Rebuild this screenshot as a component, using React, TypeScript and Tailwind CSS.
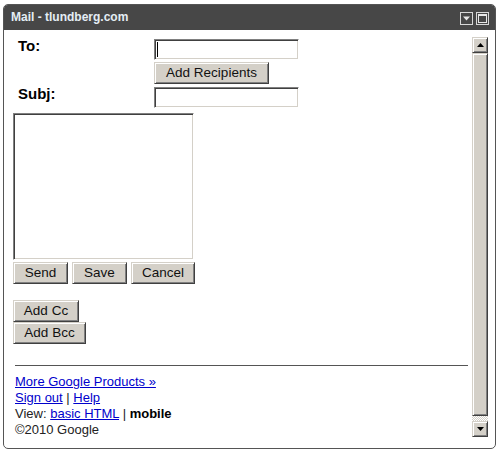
import React from "react";

const raised =
  "bg-[#d4d0c8] border border-t-[#d4d0c8] border-l-[#d4d0c8] border-b-[#404040] border-r-[#404040] shadow-[inset_1px_1px_#fff,inset_-1px_-1px_#808080]";
const sunken =
  "bg-white border border-t-[#808080] border-l-[#808080] border-b-white border-r-white shadow-[inset_1px_1px_#404040,inset_-1px_-1px_#d4d0c8] outline-none";

function Btn({ label, w }: { label: string; w: string }) {
  return (
    <button
      className={`${raised} ${w} h-[22px] flex items-center justify-center text-[13.5px] text-[#111] leading-none`}
    >
      {label}
    </button>
  );
}

function Scrollbar() {
  return (
    <div className="w-[16px] flex flex-col">
      <div className={`${raised} h-[16px] flex items-center justify-center`}>
        <svg width="7" height="4" viewBox="0 0 7 4">
          <path d="M3.5 0 L7 4 L0 4 Z" fill="#000" />
        </svg>
      </div>
      <div className={`${raised} flex-1`} />
      <div className="h-[5px] bg-[repeating-conic-gradient(#d4d0c8_0_25%,#fff_0_50%)] bg-[length:2px_2px]" />
      <div className={`${raised} h-[16px] flex items-center justify-center`}>
        <svg width="7" height="4" viewBox="0 0 7 4">
          <path d="M0 0 L7 0 L3.5 4 Z" fill="#000" />
        </svg>
      </div>
    </div>
  );
}

export default function App() {
  return (
    <div className="w-[499px] h-[453px] bg-white pt-[4px] pl-[3px] font-['Liberation_Sans',Arial,sans-serif]">
      {/* Gadget frame */}
      <div className="w-[493px] h-[445px] border border-[#555] rounded-[5px] overflow-hidden flex flex-col">
        {/* Title bar */}
        <div className="h-[26px] bg-[#474747] flex items-center justify-between pl-[7px] pr-[6px] -mt-px">
          <span className="text-[12px] font-bold text-[#e4edf4] leading-none">Mail - tlundberg.com</span>
          <div className="flex items-center gap-[3px] pt-[2px]">
            <svg width="13" height="13" viewBox="0 0 13 13">
              <rect x="0.5" y="0.5" width="12" height="12" fill="none" stroke="#d8d8d8" />
              <path d="M3 4.5 L10 4.5 L6.5 8.5 Z" fill="#e8e8e8" />
            </svg>
            <svg width="13" height="13" viewBox="0 0 13 13">
              <rect x="0.5" y="0.5" width="12" height="12" fill="none" stroke="#d8d8d8" />
              <rect x="2.5" y="2.5" width="8" height="8" fill="none" stroke="#e8e8e8" />
              <rect x="2" y="2" width="9" height="2" fill="#e8e8e8" />
            </svg>
          </div>
        </div>

        {/* Scroll pane */}
        <div className="mt-[7px] h-[400px] flex pr-[7px]">
          <div className="flex-1 overflow-hidden pl-[9px]">
            <div className="grid grid-cols-[141px_auto]">
              <div className="pl-[5px] text-[15px] font-bold text-black leading-[18px]">To:</div>
              <div className="flex flex-col items-start">
                <div className="relative mt-[2px]">
                  <input className={`${sunken} block w-[145px] h-[21px] px-1 text-[13px]`} />
                  <span className="absolute left-[3px] top-[3px] w-px h-[15px] bg-black" />
                </div>
                <div className="mt-[2px]">
                  <Btn label="Add Recipients" w="w-[115px]" />
                </div>
              </div>
              <div className="pl-[5px] mt-[1px] text-[15px] font-bold text-black leading-[18px]">Subj:</div>
              <div className="mt-[3px]">
                <input className={`${sunken} block w-[145px] h-[21px] px-1 text-[13px]`} />
              </div>
            </div>

            <textarea className={`${sunken} block mt-[5px] w-[181px] h-[147px] resize-none`} />

            <div className="flex gap-[4px] mt-[2px]">
              <Btn label="Send" w="w-[55px]" />
              <Btn label="Save" w="w-[55px]" />
              <Btn label="Cancel" w="w-[64px]" />
            </div>

            <div className="flex flex-col items-start mt-[16px]">
              <Btn label="Add Cc" w="w-[66px]" />
              <Btn label="Add Bcc" w="w-[73px]" />
            </div>

            <div className="ml-[2px] mt-[21px] w-[453px] border-t border-[#555]" />

            <div className="ml-[2px] mt-[8px] text-[13px] leading-[16px] text-[#222]">
              <div>
                <a href="#" className="text-[#00c] underline">More Google Products »</a>
              </div>
              <div>
                <a href="#" className="text-[#00c] underline">Sign out</a> | <a href="#" className="text-[#00c] underline">Help</a>
              </div>
              <div>
                View: <a href="#" className="text-[#00c] underline">basic HTML</a> | <b className="text-black">mobile</b>
              </div>
              <div>©2010 Google</div>
            </div>
          </div>
          <Scrollbar />
        </div>
      </div>
    </div>
  );
}
